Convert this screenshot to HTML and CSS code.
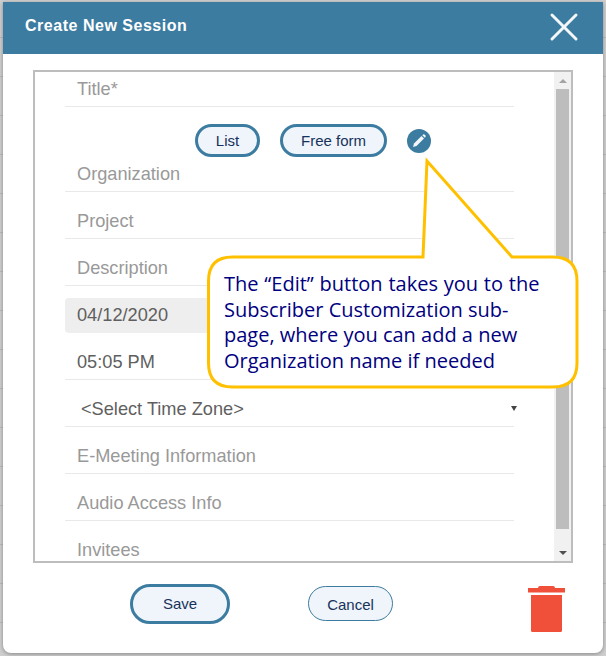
FILE: index.html
```html
<!DOCTYPE html>
<html lang="en">
<head>
    <meta charset="UTF-8">
    <title>Create New Session</title>
    <link rel="stylesheet" href="styles.css">
</head>
<body>
    <div class="dialog">
        <div class="dialog-header">
            <h1>Create New Session</h1>
            <svg class="close" width="30" height="30" viewBox="0 0 30 30">
                <path d="M3 3 L27 27 M27 3 L3 27" stroke="#f4f7f9" stroke-width="3" stroke-linecap="round" fill="none"/>
            </svg>
        </div>
        <div class="dialog-body">
            <div class="frame">
                <div class="form">
                    <div class="field first">Title*</div>
                    <div class="mode-row">
                        <button class="pill">List</button>
                        <button class="pill">Free form</button>
                        <span class="edit">
                            <svg width="16" height="16" viewBox="0 0 16 16">
                                <path d="M2 14 L3 10.5 L10.5 3 L13 5.5 L5.5 13 Z" fill="#f4f7f9"/>
                                <path d="M11.3 2.2 L12.2 1.4 Q12.8 1 13.4 1.5 L14.5 2.6 Q15 3.2 14.6 3.8 L13.8 4.7 Z" fill="#f4f7f9"/>
                            </svg>
                        </span>
                    </div>
                    <div class="field org">Organization</div>
                    <div class="field">Project</div>
                    <div class="field">Description</div>
                    <div class="field value date">04/12/2020</div>
                    <div class="field value">05:05 PM</div>
                    <div class="field value zone">&lt;Select Time Zone&gt;<span class="caret"></span></div>
                    <div class="field">E-Meeting Information</div>
                    <div class="field">Audio Access Info</div>
                    <div class="field">Invitees</div>
                </div>
                <div class="scrollbar">
                    <div class="arrow up"></div>
                    <div class="thumb"></div>
                    <div class="arrow down"></div>
                </div>
            </div>
            <div class="actions">
                <button class="pill save">Save</button>
                <button class="pill cancel">Cancel</button>
                <svg class="trash" width="38" height="46" viewBox="0 0 38 46">
                    <path d="M10 2 Q10 0 12 0 L25 0 Q27 0 27 2 L37 2 L37 6.5 L0 6.5 L0 2 Z" fill="#f05039"/>
                    <path d="M3 9 L34 9 L34 44.5 Q34 46 32.5 46 L4.5 46 Q3 46 3 44.5 Z" fill="#f05039"/>
                </svg>
            </div>
        </div>
        <div class="callout">
            <svg width="376" height="236" viewBox="0 0 376 236">
                <path d="M26.5 102 L217 102 L221 6 L306 102 L347 102 Q371 102 371 126 L371 208 Q371 232 347 232 L26.5 232 Q2.5 232 2.5 208 L2.5 126 Q2.5 102 26.5 102 Z" fill="#fff" stroke="#ffc000" stroke-width="3"/>
            </svg>
            <p><span class="wide">The “Edit” button takes you to the</span><br>Subscriber Customization sub-<br>page, where you can add a new<br>Organization name if needed</p>
        </div>
    </div>
</body>
</html>
```

FILE: styles.css
```css
html, body { margin: 0; height: 100%; }
body { background: repeating-linear-gradient(#cfcfcf 0 37px, #bcbcbc 37px 38px, #cfcfcf 38px 39px); font-family: "Liberation Sans", Arial, sans-serif; overflow: hidden; padding: 2px 3px 3px; box-sizing: border-box; }
.dialog { position: relative; width: 600px; height: 651px; background: #fff; border-radius: 0 0 8px 8px; box-shadow: 0 1px 4px rgba(0,0,0,.35); }
.dialog-header { height: 52px; background: #3c7ca1; display: flex; justify-content: space-between; align-items: flex-start; box-sizing: border-box; padding: 0 24px 0 22px; }
.dialog-header h1 { margin: 14px 0 0; font-size: 16px; line-height: 19px; color: #fff; letter-spacing: .52px; }
.close { margin-top: 10px; }
.dialog-body { padding: 16px 30px 0; }
.frame { display: flex; height: 493px; box-sizing: border-box; border: 2px solid #bdbdbd; overflow: hidden; }
.form { flex: 1; padding: 0 40px 0 30px; }
.field { height: 47px; box-sizing: border-box; border-bottom: 1px solid #e9e9e9; padding: 18px 12px 0; font-size: 18.2px; line-height: 22px; color: #999; }
.field.first { height: 35px; padding-top: 6px; }
.field.org { height: 35px; padding-top: 6px; }
.field.value { color: #5f5f5f; }
.field.date { background: #eee; border-radius: 4px; height: 35px; padding-top: 6px; margin-top: 12px; border-bottom: 0; }
.field.zone { position: relative; padding-left: 16px; }
.caret { position: absolute; right: -3px; top: 26px; border: 3px solid transparent; border-top: 5px solid #444; border-bottom: 0; }
.mode-row { display: flex; align-items: center; height: 50px; padding-top: 17px; box-sizing: border-box; margin-left: 130px; }
.pill { background: #eff5fa; border: 3px solid #3c7ca1; border-radius: 17px; height: 33px; padding: 0; font: 15px "Liberation Sans", Arial, sans-serif; color: #17325c; }
.mode-row .pill:nth-child(1) { width: 65px; }
.mode-row .pill:nth-child(2) { width: 107px; margin-left: 20px; }
.edit { width: 24px; height: 24px; border-radius: 50%; background: #3c7ca1; margin-left: 20px; display: flex; align-items: center; justify-content: center; }
.scrollbar { width: 17px; background: #f1f1f1; display: flex; flex-direction: column; }
.thumb { height: 440px; background: #bdbdbd; margin: 0 2px; }
.arrow { height: 17px; position: relative; }
.arrow.down { margin-top: auto; }
.arrow::after { content: ""; position: absolute; left: 5px; top: 7px; border: 4px solid transparent; }
.arrow.up::after { border-top: 0; border-bottom: 4px solid #a3a3a3; }
.arrow.down::after { border-bottom: 0; border-top: 4px solid #505050; }
.actions { display: flex; align-items: flex-start; padding-top: 21px; }
.pill.save { width: 100px; height: 40px; border-radius: 20px; margin-left: 97px; padding-bottom: 2px; }
.pill.cancel { width: 85px; height: 35px; border-width: 1px; border-radius: 18px; margin: 2px 0 0 78px; padding-top: 2px; }
.trash { margin: 2px 0 0 135px; }
.callout { position: absolute; left: 203px; top: 153px; width: 376px; height: 236px; }
.callout svg { display: block; }
.callout p { position: absolute; left: 18px; top: 116px; margin: 0; font: 20px/25.6px "Open Sans", "Noto Sans", sans-serif; color: #000080; white-space: nowrap; }
.wide { word-spacing: .6px; }
```
